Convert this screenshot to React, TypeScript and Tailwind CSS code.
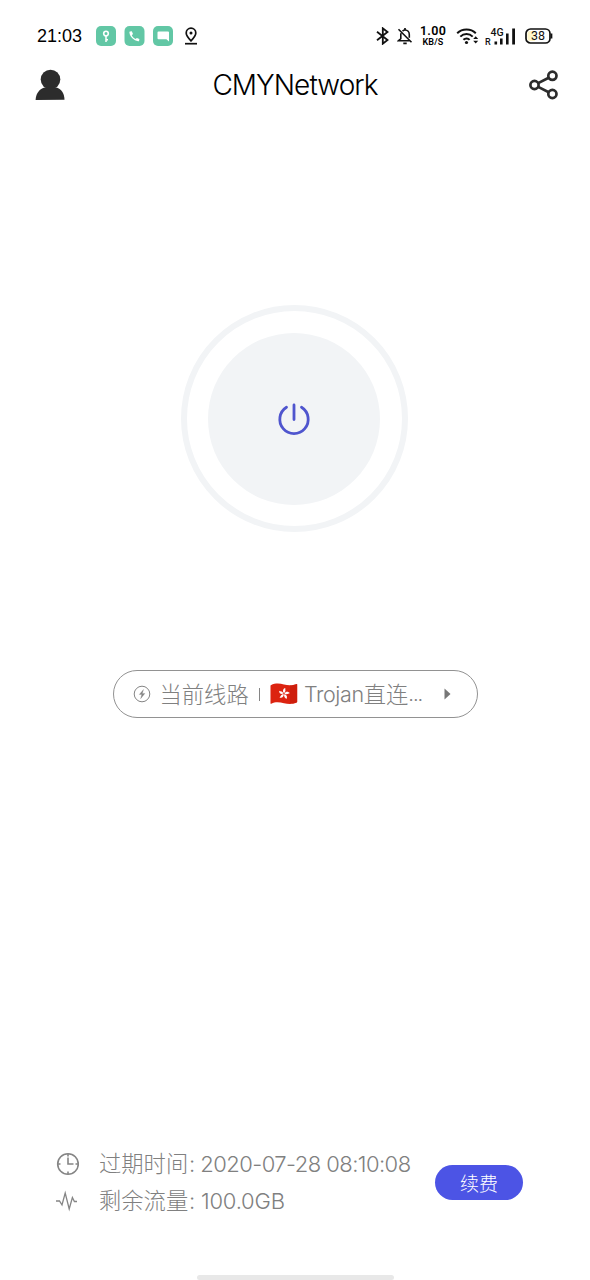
import React from 'react';

const latin = "font-['Inter','Noto_Sans_CJK_SC',sans-serif] font-light";
const cjk = "font-['Noto_Sans_CJK_SC',sans-serif] font-light";

function StatusBar() {
  return (
    <div className="flex h-[72px] shrink-0 items-center justify-between pl-[37px] pr-[37px] text-black">
      <div className="flex items-center">
        <span className="w-[59px] whitespace-nowrap font-['Liberation_Sans',sans-serif] text-[18px] leading-5">21:03</span>
        <svg width="77" height="20" viewBox="0 0 77 20" fill="none">
          <rect width="20" height="20" rx="5" fill="#62c7a5" />
          <circle cx="10" cy="7.6" r="2.3" stroke="#fff" strokeWidth="1.6" />
          <path d="M10 10v6M10 13.800h2" stroke="#fff" strokeWidth="1.5" />
          <rect x="28.5" width="20" height="20" rx="5" fill="#62c7a5" />
          <path d="M34 5.500l1.800-.2 1.200 2.700-1.200 1.200c.8 1.700 2 2.800 3.700 3.700l1.400-1 2.500 1-.3 1.800c-.1.500-.5.600-1 .500C37.900 14.500 34 11 33.400 6.500c0-.5.1-.9.6-1z" fill="#fff" />
          <rect x="57" width="20" height="20" rx="5" fill="#62c7a5" />
          <path d="M62.500 5.500h9.500a1 1 0 0 1 1 1v9l-2.600-2.300h-7.900a1 1 0 0 1-1-1V6.500a1 1 0 0 1 1-1z" fill="#fff" />
        </svg>
        <svg className="ml-[11px]" width="14" height="18" viewBox="0 0 14 18" fill="none" stroke="#111">
          <path d="M7 13.800C4.200 11 2.200 8.700 2.200 6a4.800 4.800 0 0 1 9.600 0c0 2.700-2 5-4.800 7.800z" strokeWidth="1.7" />
          <circle cx="7" cy="6" r="1.500" fill="#111" stroke="none" />
          <path d="M1 16.700h12" strokeWidth="1.700" />
        </svg>
      </div>

      <div className="flex items-center">
        <svg width="14" height="18" viewBox="0 0 14 18" fill="none" stroke="#111" strokeWidth="1.800">
          <path d="M1 4.700l10.500 8.300-4.700 3.700V1.300l4.700 3.700L1 13.300" />
        </svg>
        <svg className="ml-[7px]" width="16" height="18" viewBox="0 0 16 18" fill="none" stroke="#111" strokeWidth="1.600">
          <path d="M5.500 4.200C6.500 3.300 7 3 8 3c2.600 0 4.300 2 4.300 4.500v3.200M3.800 6.200v5.500l-2.300 2h11.200M1.500 2.200l13 13" />
          <path d="M8 1v2M6.300 16.300h3.400" strokeWidth="1.700" />
        </svg>
        <div className="ml-[6px] flex w-[28px] flex-col items-center font-['Roboto',sans-serif] font-semibold">
          <span className="text-[12.5px] leading-[12px] tracking-[0.3px]">1.00</span>
          <span className="text-[9px] leading-[11px] tracking-[0.2px]">KB/S</span>
        </div>
        <svg className="ml-[9px]" width="23" height="18" viewBox="0 0 23 18" fill="none" stroke="#111" strokeWidth="2">
          <path d="M1.200 6.200c5-5 13.600-5 18.600 0M4.300 9.600c3.500-3.400 9-3.400 12.400 0M7.400 12.800c1.900-1.800 4.600-1.800 6.200 0" />
          <circle cx="10.500" cy="15.500" r="1.600" fill="#111" stroke="none" />
          <path d="M17.200 12l2.500-2.800 2.500 2.800zM17.200 13.800l2.500 2.800 2.500-2.800z" fill="#111" stroke="none" />
        </svg>
        <svg className="ml-[6px]" width="32" height="20" viewBox="0 0 32 20" fill="#111">
          <text x="0" y="18.500" className="font-['Roboto',sans-serif] text-[9px] font-medium">R</text>
          <text x="5.500" y="9.500" className="font-['Roboto',sans-serif] text-[10.5px] font-medium">4G</text>
          <path d="M9.500 15.500h2.600v3H9.500zM15 12.500h2.600v6H15zM21 7.500h2.600v11H21zM27.200 2.500h2.800v16h-2.800z" />
        </svg>
        <svg className="ml-[8px]" width="28" height="16" viewBox="0 0 28 16">
          <rect x="1" y="1" width="24" height="14" rx="4.500" fill="#fff" stroke="#111" strokeWidth="1.700" />
          <path d="M5 3h5v10H5a2.500 2.500 0 0 1-2.500-2.500v-5A2.500 2.500 0 0 1 5 3z" fill="#fff6c9" />
          <path d="M26.500 5.500v5" stroke="#111" strokeWidth="1.700" />
          <text x="13" y="12.200" textAnchor="middle" fill="#111" className="font-['Roboto',sans-serif] text-[12.5px]">38</text>
        </svg>
      </div>
    </div>
  );
}

function Header() {
  return (
    <header className="flex h-[26px] shrink-0 items-center justify-between pl-[35px] pr-[31px]">
      <svg width="30" height="32" viewBox="0 0 30 32" fill="#2c2c2c">
        <circle cx="15.500" cy="10.500" r="9.800" />
        <path d="M.6 31C.8 25 4 20.200 9.500 18.500h12c5.200 1.700 8 6.500 8 12.300z" />
      </svg>
      <h1 className={`${latin} mr-[4px] whitespace-nowrap text-[28px] leading-8 tracking-[-0.95px] text-black`}>CMYNetwork</h1>
      <svg width="30" height="30" viewBox="0 0 30 30" fill="none" stroke="#2c2c2c" strokeWidth="2.700">
        <circle cx="5.500" cy="15" r="4.100" />
        <circle cx="23.400" cy="5.800" r="4.100" />
        <circle cx="23.400" cy="24" r="4.100" />
        <path d="M9.200 13.100l10.500-5.400M9.200 16.900l10.500 5.300" />
      </svg>
    </header>
  );
}

function PowerButton() {
  return (
    <button className="mr-[2px] flex size-[227px] items-center justify-center rounded-full border-[6px] border-[#f2f4f6] bg-white">
      <span className="flex size-[172px] shrink-0 items-center justify-center rounded-full bg-[#f2f4f6]">
        <svg width="34" height="34" viewBox="0 0 34 34" fill="none" stroke="#4f55ce" strokeWidth="2.800" strokeLinecap="round">
          <path d="M9.500 5.300a14.200 14.200 0 1 0 15 0M17 3v14.500" />
        </svg>
      </span>
    </button>
  );
}

function HongKongFlag() {
  return (
    <svg width="28" height="22" viewBox="0 0 28 22">
      <path d="M.8 2.200C6-.2 10 .6 14 1.500s8 1.200 12.500-.5q.7-.2.7.6v17.200q0 .7-.7 1c-4.500 1.700-8.500 1.300-12.500.5S6 18.500 1.300 20.700Q.5 21 .5 20.200V2.800q0-.4.3-.6z" fill="#dc2310" />
      <path d="M20 2.300q4 0 7.200-1.400v18q-3 1.700-7.200 1.700z" fill="#b91608" opacity=".4" />
      <g fill="#fff">
        {[0, 72, 144, 216, 288].map((angle) => (
          <path key={angle} d="M14 10.200c-2.200-1.300-2.200-4.100.2-5.300-.4 1.400 1.700 2.400-.2 5.300z" transform={`rotate(${angle + 12} 14 10.700)`} />
        ))}
      </g>
    </svg>
  );
}

function RouteSelector() {
  return (
    <button className="flex h-12 w-[365px] items-center rounded-full border border-[#929292] pl-[19px] text-[#808080]">
      <svg width="18" height="18" viewBox="0 0 18 18" fill="none" stroke="#858585">
        <circle cx="9" cy="9" r="7.800" strokeWidth="1" />
        <path d="M10.500 4.500L6.300 9.500h2.500l-1.200 4.200 4.300-5.300H9.300z" fill="#858585" strokeWidth=".3" />
      </svg>
      <span className={`${cjk} mb-[3px] ml-[9px] w-[91px] whitespace-nowrap text-left text-[22.3px] leading-8`}>当前线路</span>
      <span className="ml-[8px] h-[13px] w-[1.500px] bg-[#858585]" />
      <span className="ml-[10px]">
        <HongKongFlag />
      </span>
      <span className="ml-[6px] flex w-[120px] whitespace-nowrap leading-8">
        <span className={`${latin} text-[21.5px] tracking-[-0.4px]`}>Trojan</span>
        <span className={`${cjk} -mt-[1.5px] mb-[1.5px] text-[22.3px]`}>直连</span>
        <span className={`${latin} text-[20px] tracking-[-1px]`}>...</span>
      </span>
      <svg className="ml-[20px]" width="7" height="12" viewBox="0 0 7 12" fill="#777">
        <path d="M.5.500L6.500 6l-6 5.500z" />
      </svg>
    </button>
  );
}

function AccountInfo() {
  return (
    <footer className="flex items-center pl-[55px] text-[22px] text-[#808080]">
      <div className="w-[380px]">
        <div className="flex h-[37px] items-center">
          <svg className="mr-5" width="24" height="24" viewBox="0 0 24 24" fill="none" stroke="#858585" strokeWidth="1.600">
            <circle cx="13" cy="12" r="10.300" />
            <path d="M13 5.500V12h5.500M13 2v2.500M13 19.500V22M3 12h2.500M20.500 12H23" />
          </svg>
          <span className={`${cjk} mb-[3px] w-[88px] whitespace-nowrap text-[22.3px] leading-8`}>过期时间</span>
          <span className={`${latin} ml-[2px] whitespace-nowrap leading-8 tracking-[-0.55px]`}>: 2020-07-28 08:10:08</span>
        </div>
        <div className="flex h-[37px] items-center">
          <svg className="mr-5" width="24" height="24" viewBox="0 0 24 24" fill="none" stroke="#858585" strokeWidth="1.300">
            <path d="M1 12h3.500l2.500 4L10.200 4l4 16 3.200-11.500 2 4H22" />
          </svg>
          <span className={`${cjk} mb-[3px] w-[88px] whitespace-nowrap text-[22.3px] leading-8`}>剩余流量</span>
          <span className={`${latin} ml-[2px] whitespace-nowrap leading-8 tracking-[-0.2px]`}>: 100.0GB</span>
        </div>
      </div>
      <button className={`${cjk} h-[35px] w-[88px] rounded-full bg-[#4c54e5] text-[19px] leading-[33px] text-white`}>续费</button>
    </footer>
  );
}

export default function App() {
  return (
    <main className="flex h-[1280px] w-[590px] flex-col overflow-hidden bg-white">
      <StatusBar />
      <Header />
      <section className="flex grow flex-col items-center pt-[207px]">
        <PowerButton />
        <div className="mt-[138px]">
          <RouteSelector />
        </div>
      </section>
      <AccountInfo />
      <div className="mx-auto mt-[56px] h-[5px] w-[197px] shrink-0 rounded-full bg-[#e8e8e8]" />
    </main>
  );
}
